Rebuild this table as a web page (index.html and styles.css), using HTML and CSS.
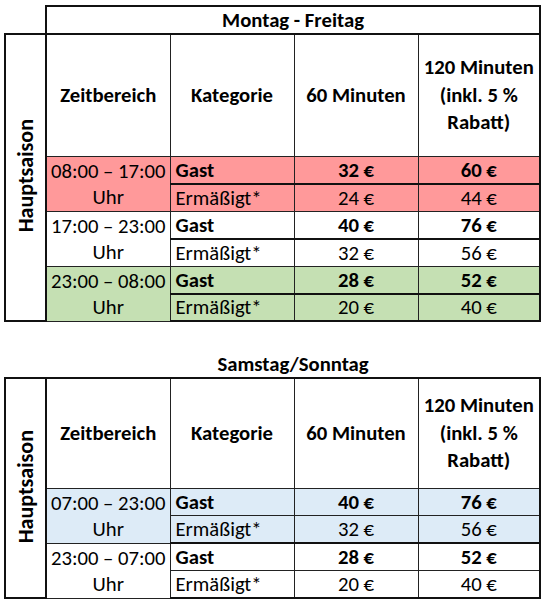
FILE: index.html
```html
<!DOCTYPE html>
<html lang="de">
<head>
<meta charset="utf-8">
<link rel="stylesheet" href="styles.css">
</head>
<body>
<div class="page">
<table class="tbl t1">
  <colgroup><col class="c-season"><col class="c-col"><col class="c-col"><col class="c-col"><col class="c-last"></colgroup>
  <tr class="r-title"><td class="blank"></td><th colspan="4" class="title boxed">Montag - Freitag</th></tr>
  <tr class="r-head">
    <th rowspan="7" class="season"><span>Hauptsaison</span></th>
    <th>Zeitbereich</th><th>Kategorie</th><th>60 Minuten</th><th class="multi">120 Minuten<br>(inkl. 5 %<br>Rabatt)</th>
  </tr>
  <tr class="r-data red sep-thick">
    <td rowspan="2" class="time">08:00 – 17:00<br>Uhr</td>
    <td class="cat b">Gast</td><td class="price b">32 €</td><td class="price b">60 €</td>
  </tr>
  <tr class="r-data red">
    <td class="cat">Ermäßigt*</td><td class="price l">24 €</td><td class="price l">44 €</td>
  </tr>
  <tr class="r-data sep-thick">
    <td rowspan="2" class="time">17:00 – 23:00<br>Uhr</td>
    <td class="cat b">Gast</td><td class="price b">40 €</td><td class="price b">76 €</td>
  </tr>
  <tr class="r-data">
    <td class="cat">Ermäßigt*</td><td class="price l">32 €</td><td class="price l">56 €</td>
  </tr>
  <tr class="r-data green sep-thick">
    <td rowspan="2" class="time">23:00 – 08:00<br>Uhr</td>
    <td class="cat b">Gast</td><td class="price b">28 €</td><td class="price b">52 €</td>
  </tr>
  <tr class="r-data green">
    <td class="cat">Ermäßigt*</td><td class="price l">20 €</td><td class="price l">40 €</td>
  </tr>
</table>

<table class="tbl t2">
  <colgroup><col class="c-season"><col class="c-col"><col class="c-col"><col class="c-col"><col class="c-last"></colgroup>
  <tr class="r-title2"><td class="blank"></td><th colspan="4" class="title plain">Samstag/Sonntag</th></tr>
  <tr class="r-head2">
    <th rowspan="5" class="season"><span>Hauptsaison</span></th>
    <th>Zeitbereich</th><th>Kategorie</th><th>60 Minuten</th><th class="multi">120 Minuten<br>(inkl. 5 %<br>Rabatt)</th>
  </tr>
  <tr class="r-data blue">
    <td rowspan="2" class="time">07:00 – 23:00<br>Uhr</td>
    <td class="cat b">Gast</td><td class="price b">40 €</td><td class="price b">76 €</td>
  </tr>
  <tr class="r-data blue sep-thick">
    <td class="cat">Ermäßigt*</td><td class="price l">32 €</td><td class="price l">56 €</td>
  </tr>
  <tr class="r-data">
    <td rowspan="2" class="time">23:00 – 07:00<br>Uhr</td>
    <td class="cat b">Gast</td><td class="price b">28 €</td><td class="price b">52 €</td>
  </tr>
  <tr class="r-data">
    <td class="cat">Ermäßigt*</td><td class="price l">20 €</td><td class="price l">40 €</td>
  </tr>
</table>
</div>
</body>
</html>
```

FILE: styles.css
```css
* { box-sizing: border-box; }
html, body { margin: 0; padding: 0; background: #fff; }
body {
  font-family: Carlito, Lato, "Open Sans", sans-serif;
  font-size: 20.7px;
  color: #000;
}
.page {
  padding: 5px 0 0 4px;
  display: flex;
  flex-direction: column;
}
.tbl {
  border-collapse: collapse;
  table-layout: fixed;
  width: 535px;
}
.c-season { width: 41px; }
.c-col { width: 124px; }
.c-last { width: 122px; }
.tbl th, .tbl td {
  padding: 0;
  border: 1px solid #222;
  text-align: center;
  vertical-align: middle;
  line-height: 20px;
}
.tbl th { font-weight: 700; }
.tbl th.multi { line-height: 27.5px; }
.tbl td.blank { border: none; }
.r-title th { height: 28px; border: 2px solid #111; }
.title.plain { border: none; border-bottom: 2px solid #111; }
.r-title2 th, .r-title2 td { height: 28px; }
.t2 { margin-top: 28px; }
.r-head th { height: 122px; }
.r-head2 th { height: 110px; }
.season { border: 2px solid #111 !important; }
.season span {
  display: inline-block;
  writing-mode: vertical-rl;
  transform: rotate(180deg);
  line-height: 1;
  font-size: 22px;
}
.r-data td { height: 27.5px; }
.tbl td.time { line-height: 26px; }
.cat { text-align: left !important; padding-left: 5px !important; }
.b { font-weight: 700; }
.l { font-weight: 300; }
.red td { background: #ff999a; }
.green td { background: #c5e0b3; }
.blue td { background: #ddebf7; }
.sep-thick td:not(.time) { border-bottom: 2px solid #111; }
.blue.sep-thick td { border-bottom: 2px solid #111; }
.tbl .r-data td:last-child { border-right: 2px solid #111; }
.t1 .r-head th:last-child, .t2 .r-head2 th:last-child { border-right: 2px solid #111; }
.t2 .r-head2 th { border-top: 2px solid #111; }
.tbl tr:last-child td { border-bottom: 2px solid #111; }
```
